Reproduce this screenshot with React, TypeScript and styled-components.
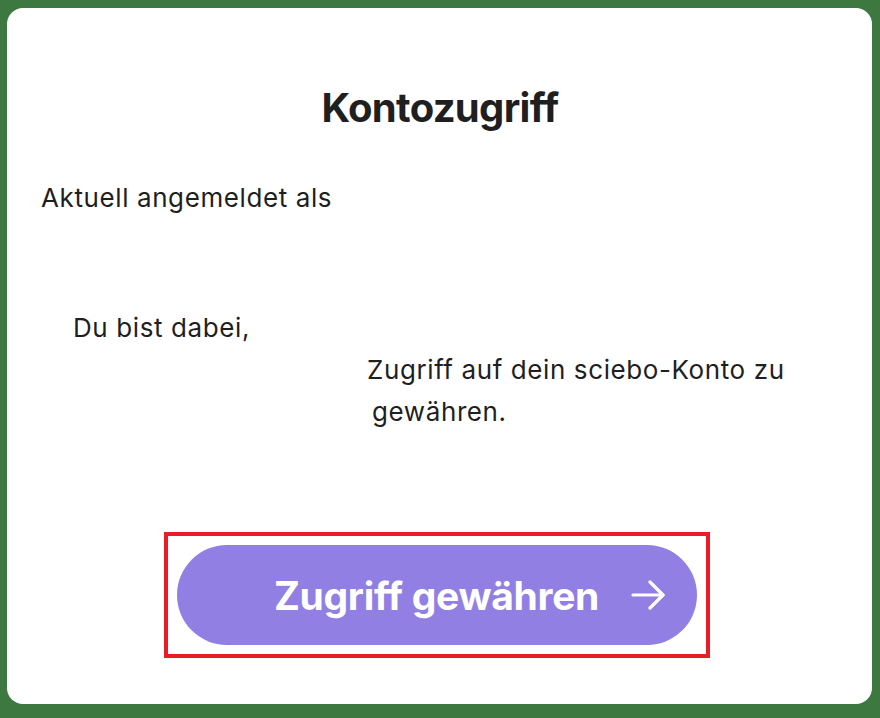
import styled, { createGlobalStyle } from "styled-components";

const GlobalStyle = createGlobalStyle`
    html, body {
        margin: 0;
        padding: 0;
        background-color: #3d7841;
    }
    body {
        padding: 8px 8px 14px 7px;
        font-family: Inter, "Noto Sans", "Liberation Sans", sans-serif;
        color: #1f1f1f;
    }
`

const StyledCard = styled.main`
    background-color: #ffffff;
    border-radius: 16px;
    box-sizing: border-box;
    display: flex;
    flex-direction: column;
    height: 696px;
    padding: 78px 33px 0 34px;
    width: 865px;
`

const StyledTitle = styled.h1`
    font-size: 40px;
    font-weight: 700;
    letter-spacing: -0.7px;
    line-height: 43px;
    margin: 0 0 48px;
    text-align: center;
`

const StyledText = styled.p`
    font-size: 26px;
    letter-spacing: 0.6px;
    line-height: 42px;
    margin: 0;
`

interface StyledLineProps {
    readonly indent: number;
}

const StyledLine = styled.span<StyledLineProps>`
    display: block;
    padding-left: ${({ indent }) => indent}px;
`

const StyledInvite = styled(StyledText)`
    margin-top: 88px;
`

const StyledFrame = styled.div`
    align-self: center;
    border: 4px solid #e81d25;
    margin: 99px 7px 0 0;
    padding: 9px;
`

const StyledButton = styled.button`
    align-items: center;
    background-color: #917fe3;
    border: none;
    border-radius: 50px;
    color: #ffffff;
    cursor: pointer;
    display: grid;
    font-family: Inter, "Noto Sans", "Liberation Sans", sans-serif;
    font-size: 39px;
    font-weight: 700;
    grid-template-columns: 1fr auto 1fr;
    height: 100px;
    letter-spacing: -0.3px;
    padding: 0 32px;
    width: 520px;
`

const StyledLabel = styled.span`
    grid-column: 2;
`

const StyledArrow = styled.svg`
    grid-column: 3;
    justify-self: end;
`

const ArrowIcon = () => (
    <StyledArrow width="34" height="30" viewBox="0 0 34 30" fill="none" stroke="#ffffff" strokeWidth="3.2" strokeLinecap="round" strokeLinejoin="round">
        <path d="M2 15h30" />
        <path d="M19 2l13 13-13 13" />
    </StyledArrow>
)

const App = () => {
    return (
        <>
            <GlobalStyle />
            <StyledCard>
                <StyledTitle>Kontozugriff</StyledTitle>
                <StyledText>Aktuell angemeldet als</StyledText>
                <StyledInvite>
                    <StyledLine indent={32}>Du bist dabei,</StyledLine>
                    <StyledLine indent={326}>Zugriff auf dein sciebo-Konto zu</StyledLine>
                    <StyledLine indent={331}>gewähren.</StyledLine>
                </StyledInvite>
                <StyledFrame>
                    <StyledButton type="button">
                        <StyledLabel>Zugriff gewähren</StyledLabel>
                        <ArrowIcon />
                    </StyledButton>
                </StyledFrame>
            </StyledCard>
        </>
    )
}

export default App;
